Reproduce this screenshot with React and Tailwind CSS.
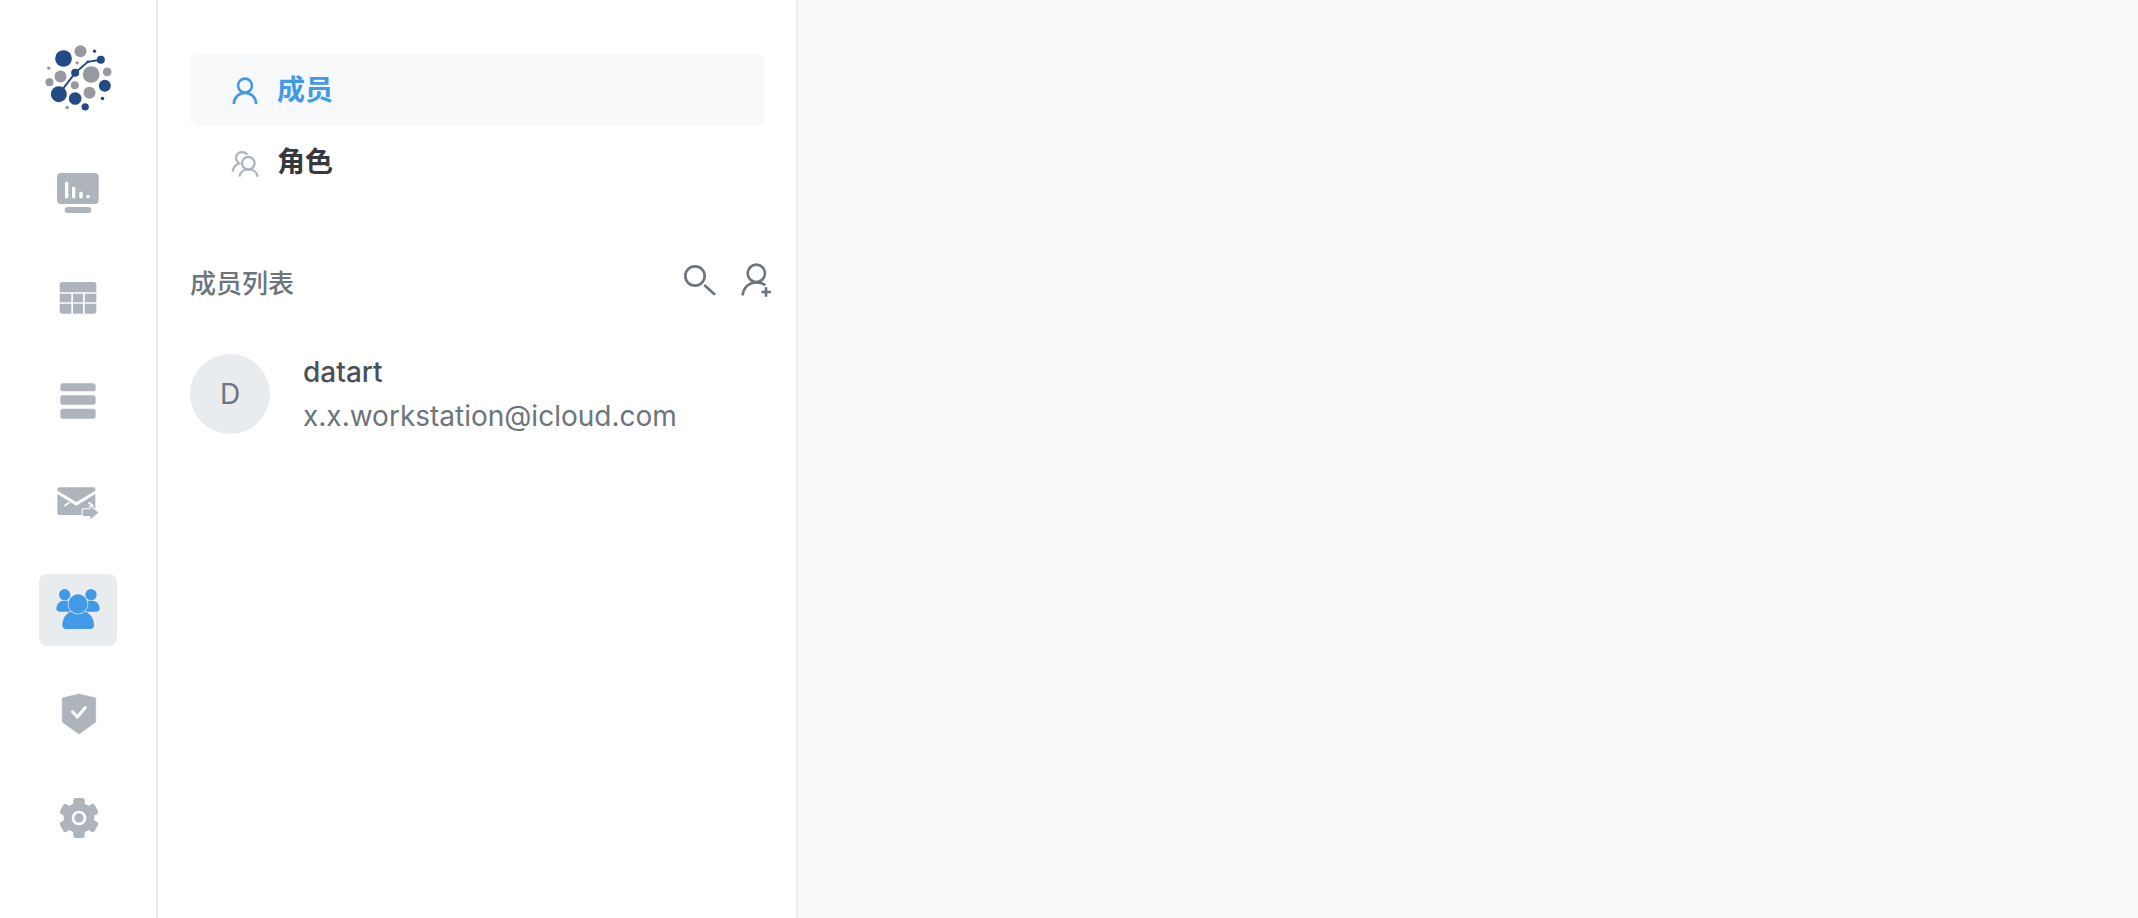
import React from 'react';

const GRAY = '#aeb4bc';
const BLUE = '#4299e8';
const NAVY = [[186,174,25],[172,281,24],[221,294,19],[251,319,11],[310,256,18],[298,178,12],[221,217,12],[279,152,5],[303,294,5.5],[259,184,4]];
const GREY = [[237,152,18],[269,222,25],[177,228,18],[264,277,18],[220,254,12],[317,214,13],[144,245,12],[227,187,5],[142,203,5],[197,321,5]];

function Logo() {
  return (
    <svg width="75" height="75" viewBox="118.5 118.5 225 225">
      {GREY.map(([x, y, r]) => <circle key={`${x}-${y}`} cx={x} cy={y} r={r} fill="#96999f" />)}
      <path d="M172 281 L221 217 L259 184 L298 178" fill="none" stroke="#234a85" strokeWidth="6" />
      {NAVY.map(([x, y, r]) => <circle key={`${x}-${y}`} cx={x} cy={y} r={r} fill="#234a85" />)}
    </svg>
  );
}

function MonitorIcon() {
  return (
    <svg width="48" height="48" viewBox="159 510 144 144">
      <rect x="168" y="519" width="125" height="93" rx="12" fill={GRAY} />
      <rect x="191" y="621" width="80" height="18" rx="9" fill={GRAY} />
      <rect x="192" y="545" width="10" height="50" rx="3" fill="#fff" />
      <rect x="213" y="560" width="10" height="35" rx="3" fill="#fff" />
      <rect x="235" y="575" width="10" height="20" rx="3" fill="#fff" />
      <rect x="256" y="585" width="10" height="10" rx="3" fill="#fff" />
    </svg>
  );
}

function TableIcon() {
  return (
    <svg width="48" height="48" viewBox="159 42 144 144">
      <path d="M176 74 Q176 66 184 66 H278 Q286 66 286 74 V97 H176 Z" fill={GRAY} />
      <rect x="176" y="101" width="35" height="26" fill={GRAY} />
      <rect x="216" y="101" width="30" height="26" fill={GRAY} />
      <rect x="251" y="101" width="35" height="26" fill={GRAY} />
      <path d="M176 131 H211 V161 H184 Q176 161 176 153 Z" fill={GRAY} />
      <rect x="216" y="131" width="30" height="30" fill={GRAY} />
      <path d="M251 131 H286 V153 Q286 161 278 161 H251 Z" fill={GRAY} />
    </svg>
  );
}

function StackIcon() {
  return (
    <svg width="48" height="48" viewBox="159 354 144 144">
      <rect x="178" y="370" width="106" height="24" rx="8" fill={GRAY} />
      <rect x="178" y="406" width="106" height="28" rx="8" fill={GRAY} />
      <rect x="178" y="446" width="106" height="30" rx="8" fill={GRAY} />
    </svg>
  );
}

function MailIcon() {
  return (
    <svg width="48" height="48" viewBox="159 666 144 144">
      <path d="M175 682 H277 Q283 682 283 688 V692 L226 726 L169 692 V688 Q169 682 175 682 Z" fill={GRAY} />
      <path d="M169 702 L226 737 L283 702 V759 Q283 765 277 765 H175 Q169 765 169 759 Z" fill={GRAY} />
      <path d="M190 738 L205 727 M262 727 L277 738" stroke="#fff" strokeWidth="5" />
      <path d="M245 748 H268 V738 L292 758 L268 778 V768 H245 Z" fill={GRAY} stroke="#fff" strokeWidth="6" paintOrder="stroke" strokeLinejoin="round" />
    </svg>
  );
}

function TeamIcon() {
  return (
    <svg width="48" height="48" viewBox="159 78 144 144">
      <circle cx="191" cy="104" r="17" fill={BLUE} />
      <circle cx="270" cy="104" r="17" fill={BLUE} />
      <path d="M166 145 Q168 122 190 122 H210 V155 H176 Q166 155 166 145 Z" fill={BLUE} />
      <path d="M296 145 Q294 122 272 122 H252 V155 H286 Q296 155 296 145 Z" fill={BLUE} />
      <path d="M184 195 C184 168 205 150 231 150 C257 150 279 168 279 195 Q279 207 267 207 H196 Q184 207 184 195 Z" fill={BLUE} stroke="#e9ecef" strokeWidth="4" paintOrder="stroke" />
      <circle cx="231" cy="132" r="29" fill={BLUE} stroke="#e9ecef" strokeWidth="4" paintOrder="stroke" />
    </svg>
  );
}

function ShieldIcon() {
  return (
    <svg width="48" height="48" viewBox="159 390 144 144">
      <path d="M184 414 L234 402 L284 414 V486 L234 522 L184 486 Z" fill={GRAY} stroke={GRAY} strokeWidth="2" strokeLinejoin="round" />
      <path d="M212 452 L229 471 L255 440" fill="none" stroke="#fff" strokeWidth="9" />
    </svg>
  );
}

function GearIcon() {
  return (
    <svg width="48" height="48" viewBox="159 702 144 144">
      <circle cx="234" cy="774" r="46" fill={GRAY} />
      {[0, 60, 120, 180, 240, 300].map((a) => (
        <rect key={a} x="217" y="714" width="34" height="30" rx="7" fill={GRAY} transform={`rotate(${a} 234 774)`} />
      ))}
      <circle cx="234" cy="774" r="18" fill={GRAY} stroke="#fff" strokeWidth="8" />
    </svg>
  );
}

function UserIcon() {
  return (
    <svg width="30" height="33" viewBox="180 90 90 100" fill="none" stroke={BLUE} strokeWidth="8">
      <circle cx="225" cy="125" r="21" />
      <path d="M191 181 C192 160 207 147 225 147 C243 147 258 160 259 181" />
    </svg>
  );
}

function RoleIcon() {
  return (
    <svg width="30" height="33" viewBox="180 305 90 100" fill="none" stroke={GRAY} strokeWidth="7">
      <circle cx="235" cy="357" r="19" />
      <path d="M208 398 C210 384 222 376 235 376 C250 376 262 384 263 398" />
      <path d="M232 331 C225 321 205 320 199 334 C196 344 200 352 207 358 C196 362 189 372 187 382" />
    </svg>
  );
}

function SearchIcon() {
  return (
    <svg width="40" height="40" viewBox="60 30 120 120" fill="none" stroke="#6c757d" strokeWidth="8">
      <circle cx="105" cy="78" r="29" />
      <path d="M133 105 L165 134" />
    </svg>
  );
}

function AddUserIcon() {
  return (
    <svg width="40" height="40" viewBox="230 30 120 120" fill="none" stroke="#6c757d" strokeWidth="8">
      <circle cx="288" cy="70" r="26" />
      <path d="M247 136 C249 112 268 97 288 97 C299 97 308 100 315 106" />
      <path d="M317 112 V140 M303 126 H332" />
    </svg>
  );
}

const navIcons = [
  { id: 'viz', icon: <MonitorIcon /> },
  { id: 'source', icon: <TableIcon /> },
  { id: 'view', icon: <StackIcon /> },
  { id: 'schedule', icon: <MailIcon /> },
  { id: 'members', icon: <TeamIcon />, active: true },
  { id: 'permissions', icon: <ShieldIcon /> },
  { id: 'settings', icon: <GearIcon /> },
];

export default function App() {
  return (
    <div className="flex h-screen w-full bg-[#f8f9fb] font-['Inter','Noto_Sans_CJK_SC',sans-serif]">
      <aside className="flex w-[158px] shrink-0 flex-col items-center border-r-2 border-[#e9ecf1] bg-white pt-10">
        <Logo />
        <div className="mt-[43px] flex flex-col gap-8">
          {navIcons.map((item) => (
            <div
              key={item.id}
              className={`flex h-[72px] w-[78px] items-center justify-center rounded-lg ${item.active ? 'bg-[#e9ecef]' : ''}`}
            >
              {item.icon}
            </div>
          ))}
        </div>
      </aside>

      <section className="w-[640px] shrink-0 border-r-2 border-[#e9ecf1] bg-white pt-[54px]">
        <nav className="px-8">
          <div className="flex h-[72px] items-center rounded-lg bg-[#f8f9fb] pl-10">
            <UserIcon />
            <span className="ml-[17px] text-[28px] font-semibold text-[#4299e8]">成员</span>
          </div>
          <div className="flex h-[72px] items-center pl-10">
            <RoleIcon />
            <span className="ml-[17px] text-[28px] font-semibold text-[#343a40]">角色</span>
          </div>
        </nav>

        <div className="mt-[62px] flex h-10 items-center pl-8 pr-[19px]">
          <h3 className="mt-1.5 flex-1 text-[26px] font-medium text-[#6c757d]">成员列表</h3>
          <div className="flex items-center gap-[17px]">
            <SearchIcon />
            <AddUserIcon />
          </div>
        </div>

        <div className="mt-[50px] flex items-center px-8">
          <div className="flex h-20 w-20 items-center justify-center rounded-full bg-[#e9ecef] text-[28px] text-[#6c757d]">D</div>
          <div className="ml-[33px] flex flex-col">
            <span className="text-[28px] leading-[44px] font-medium text-[#495057]">datart</span>
            <span className="text-[28px] leading-[44px] text-[#6c757d]">x.x.workstation@icloud.com</span>
          </div>
        </div>
      </section>

      <main className="flex-1" />
    </div>
  );
}
